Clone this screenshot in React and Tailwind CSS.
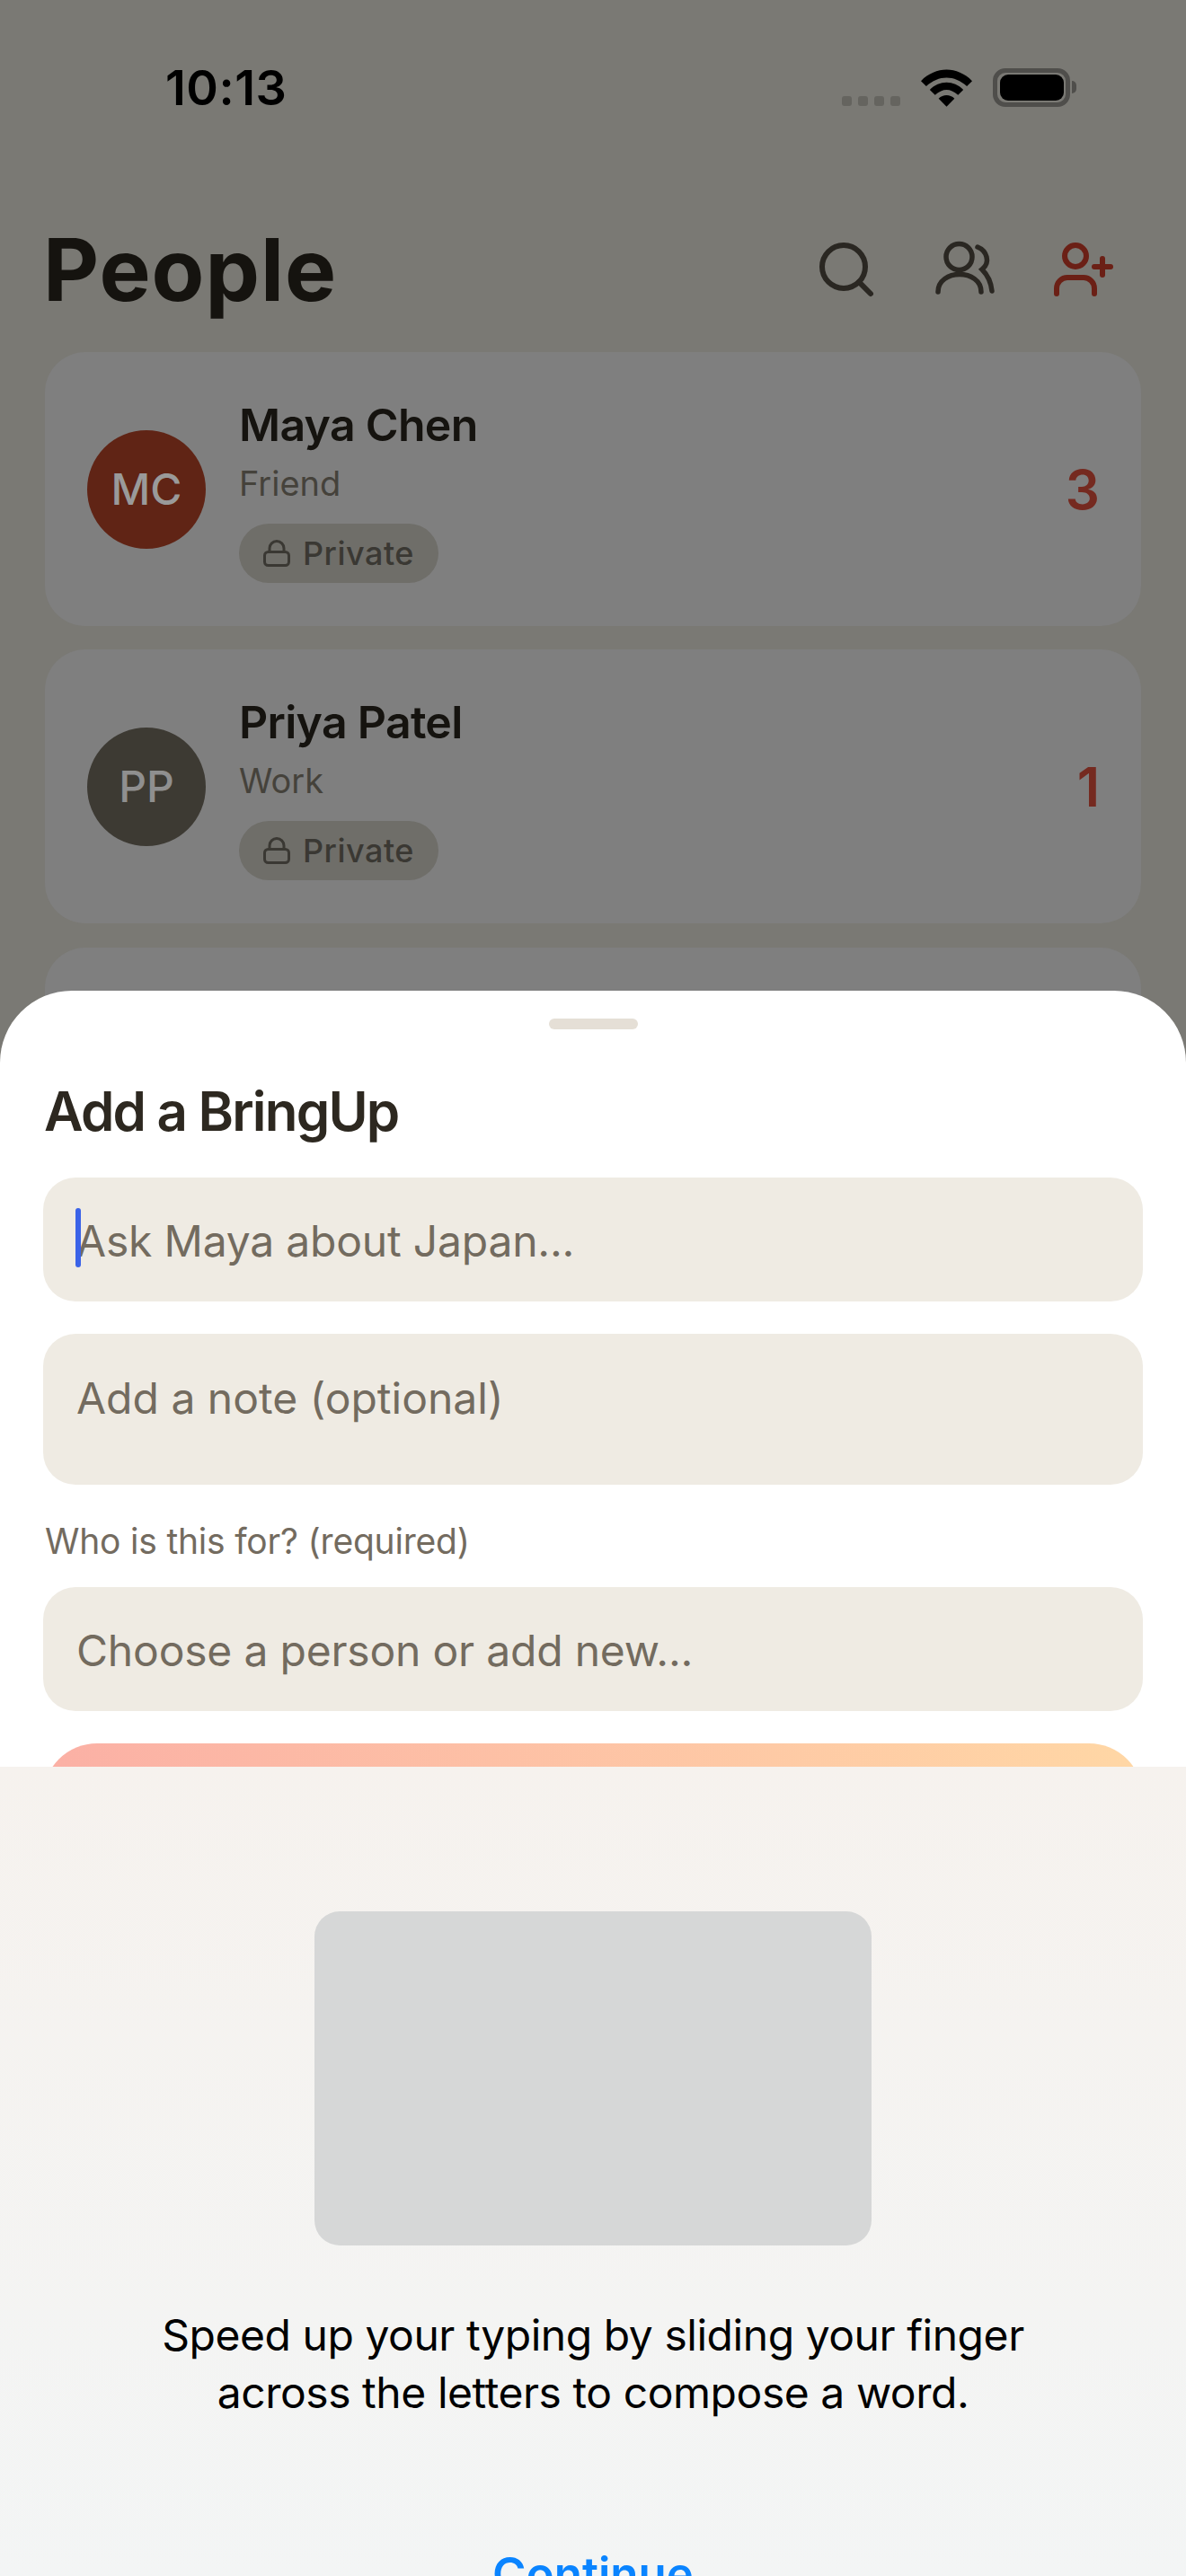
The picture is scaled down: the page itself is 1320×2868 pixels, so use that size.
import React from 'react';
import { Search, UserPlus } from 'lucide-react';

const FONT = "font-['Inter','Noto_Sans',sans-serif]";

const people = [
  { name: 'Maya Chen', role: 'Friend', initials: 'MC', count: 3, avatar: 'bg-[#602415]', initialsColor: 'text-[#9a9a9a]' },
  { name: 'Priya Patel', role: 'Work', initials: 'PP', count: 1, avatar: 'bg-[#3d3a33]', initialsColor: 'text-[#8f8f8f]' },
];

const StatusBar = () => (
  <div className="flex h-[194px] items-center justify-between pl-[184px] pr-[129px]">
    <span className="text-[54px] font-semibold tracking-[0.5px] text-black">10:13</span>
    <div className="flex items-end">
      <div className="mb-[1px] flex gap-[7px]">
        {[0, 1, 2, 3].map((i) => (
          <div key={i} className="h-[11px] w-[11px] rounded-[3px] bg-[#65645f]" />
        ))}
      </div>
      <svg className="ml-[23px]" width="57" height="42" viewBox="0 0 58 42">
        <path d="M0 13 C17 -4 41 -4 58 13 L52 19 C38 6 20 6 6 19 Z" fill="#000" />
        <path d="M10 23 C21 12 37 12 48 23 L42 29 C33 21 25 21 16 29 Z" fill="#000" />
        <path d="M20 33 C25 28 33 28 38 33 L29 42 Z" fill="#000" />
      </svg>
      <div className="relative ml-[23px] flex h-[43px] w-[86px] items-center justify-center rounded-[14px] border-[5px] border-[#4f4e4b]">
        <div className="h-[29px] w-[71px] rounded-[9px] bg-black" />
        <div className="absolute right-[-12px] h-[14px] w-[5px] rounded-r-full bg-[#4f4e4b]" />
      </div>
    </div>
  </div>
);

const PersonCard = ({ person }) => (
  <div className="flex h-[305px] items-center rounded-[45px] bg-[#7f7f7f] pl-[47px] pr-[46px]">
    <div className={`flex h-[132px] w-[132px] shrink-0 items-center justify-center rounded-full ${person.avatar}`}>
      <span className={`text-[48px] font-medium ${person.initialsColor}`}>{person.initials}</span>
    </div>
    <div className="ml-[37px] flex flex-col items-start pt-[2px]">
      <span className="text-[50px] leading-[62px] font-semibold tracking-[-0.7px] text-[#15130f]">{person.name}</span>
      <span className="mt-[10px] text-[38px] leading-[48px] text-[#45423b]">{person.role}</span>
      <div className="mt-[21px] flex h-[66px] items-center gap-[14px] rounded-full bg-[#6f6e69] pl-[27px] pr-[27px]">
        <svg width="30" height="30" viewBox="0 0 30 30" fill="none" stroke="#3a3833" strokeWidth="3" strokeLinejoin="round">
          <rect x="1.5" y="13.5" width="27" height="15" rx="4" />
          <path d="M7 13.5 V9.5 a8 8 0 0 1 16 0 V13.5" />
        </svg>
        <span className="text-[36px] font-medium tracking-[0.5px] text-[#3a3833]">Private</span>
      </div>
    </div>
    <span className="ml-auto text-[60px] font-semibold text-[#752a20]">{person.count}</span>
  </div>
);

const SheetField = ({ children }) => (
  <div className="flex h-[138px] items-center rounded-[36px] bg-[#efebe3] px-[37px] pt-[4px] text-[48px] tracking-[-0.2px] text-[#736b5f]">
    {children}
  </div>
);

export default function App() {
  return (
    <div className={`relative h-[2868px] w-[1320px] overflow-hidden bg-[#7a7974] ${FONT}`}>
      <StatusBar />

      <div className="mt-[48px] flex items-center justify-between pl-[48px] pr-[78px]">
        <h1 className="text-[96px] leading-[116px] font-bold tracking-[1px] text-[#15130f]">People</h1>
        <div className="flex items-center gap-[60px]">
          <Search size={72} strokeWidth={2} className="text-[#2a2722]" />
          <svg width="72" height="72" viewBox="0 0 72 72" fill="none" stroke="#2a2722" strokeWidth="5.5" strokeLinecap="round">
            <circle cx="29.5" cy="22" r="14.5" />
            <path d="M6 61 C6 35 54 35 54 61" />
            <path d="M50 11 C60 15 65 28 55 36 C61 42 65 50 66 60" />
          </svg>
          <UserPlus size={72} strokeWidth={2} className="text-[#6b2016]" />
        </div>
      </div>

      <div className="mt-[34px] flex flex-col gap-[26px] px-[50px]">
        {people.map((p) => (
          <PersonCard key={p.name} person={p} />
        ))}
        <div className="mt-[1px] h-[305px] rounded-[45px] bg-[#7f7f7f]" />
      </div>

      {/* bottom sheet */}
      <div className="absolute inset-x-0 top-[1103px] bottom-0 rounded-t-[80px] bg-white px-[48px]">
        <div className="mx-auto mt-[31px] h-[12px] w-[99px] rounded-full bg-[#e5dfd6]" />
        <h2 className="mt-[55px] pl-[1px] text-[60px] leading-[72px] font-semibold tracking-[-1.8px] text-[#2d2820]">Add a BringUp</h2>
        <div className="mt-[38px] flex flex-col">
          <SheetField>
            <span className="relative">
              <span className="absolute top-[-1px] left-[-1px] h-[66px] w-[6px] rounded-full bg-[#3b63e8]" />
              Ask Maya about Japan...
            </span>
          </SheetField>
          <div className="mt-[36px] h-[168px] shrink-0 rounded-[36px] bg-[#efebe3] px-[37px] pt-[37px] text-[48px] leading-[70px] text-[#736b5f]">
            Add a note (optional)
          </div>
          <label className="mt-[38px] pl-[2px] text-[39px] leading-[50px] tracking-[-0.2px] text-[#736b5f]">Who is this for? (required)</label>
          <div className="mt-[26px]">
            <SheetField>Choose a person or add new...</SheetField>
          </div>
          <div className="mt-[36px] h-[150px] shrink-0 rounded-[60px] bg-gradient-to-r from-[#fbb0a5] to-[#ffd7a5]" />
        </div>
      </div>

      {/* keyboard tip */}
      <div className="absolute inset-x-0 top-[1967px] bottom-0 flex flex-col items-center bg-gradient-to-b from-[#f6f2ee] to-[#f3f5f5]">
        <div className="mt-[161px] h-[372px] w-[620px] shrink-0 rounded-[28px] bg-[#d6d7d7]" />
        <p className="mt-[68px] shrink-0 text-center text-[48px] leading-[64px] tracking-[-0.45px] text-black">
          Speed up your typing by sliding your finger
          <br />
          across the letters to compose a word.
        </p>
        <span className="mt-[139px] shrink-0 text-[51px] leading-[62px] font-semibold text-[#0a84ff]">Continue</span>
      </div>
    </div>
  );
}
